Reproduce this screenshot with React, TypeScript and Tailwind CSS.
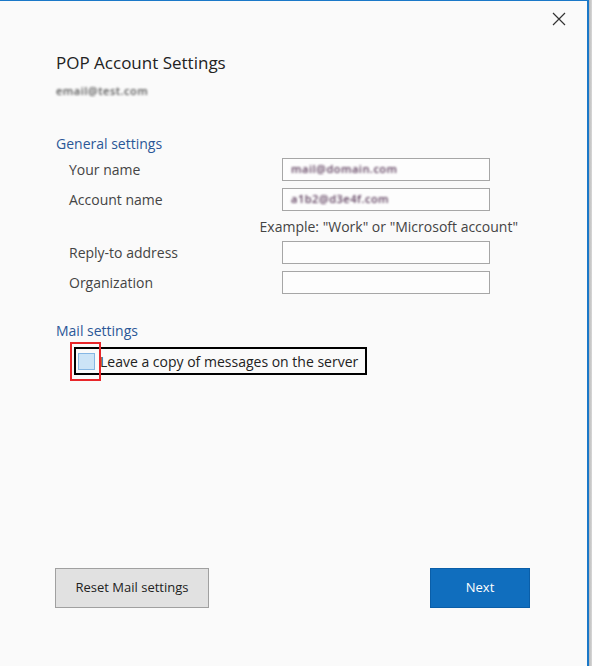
import React from "react";

const font = { fontFamily: '"Open Sans", "Noto Sans", sans-serif' };

function Field({ label, value }: { label: string; value?: string }) {
  return (
    <div className="flex items-center h-[23px]">
      <div className="w-[226px] pl-[13px] text-[14px] text-[#444444]">{label}</div>
      <div className="w-[208px] h-[23px] border border-[#a6a6a6] bg-[#fdfdfd] flex items-center pl-[8px]">
        {value ? (
          <span className="text-[11px] font-semibold text-[#5a3a5a] blur-[0.8px] tracking-[0.5px]">{value}</span>
        ) : null}
      </div>
    </div>
  );
}

export default function App() {
  return (
    <div className="w-[592px] h-[666px] flex bg-[#f9f9f9]" style={font}>
      <div className="w-[589px] h-[666px] border-t border-r-2 border-[#1a78c8] bg-[#fafafa] flex flex-col">
        <div className="h-[49px] flex justify-end pr-[21px] pt-[11px]">
          <svg width="14" height="14" viewBox="0 0 14 14">
            <path d="M1 1 L13 13 M13 1 L1 13" stroke="#333333" strokeWidth="1.2" />
          </svg>
        </div>
        <div className="pl-[56px] h-[25px] flex items-center text-[17px] text-[#222222]">
          POP Account Settings
        </div>
        <div className="pl-[56px] h-[22px] mt-[5px] flex items-center">
          <span className="text-[11px] font-semibold text-[#555555] blur-[0.8px] tracking-[0.5px]">email@test.com</span>
        </div>
        <div className="pl-[56px] mt-[31px] h-[20px] flex items-center text-[14px] text-[#2b5797]">
          General settings
        </div>
        <div className="pl-[56px] mt-[5px] flex flex-col">
          <Field label="Your name" value="mail@domain.com" />
          <div className="h-[7px]" />
          <Field label="Account name" value="a1b2@d3e4f.com" />
          <div className="h-[30px] flex items-center justify-end w-[462px] text-[14px] text-[#444444]">
            Example: "Work" or "Microsoft account"
          </div>
          <Field label="Reply-to address" />
          <div className="h-[7px]" />
          <Field label="Organization" />
        </div>
        <div className="pl-[56px] mt-[26px] h-[20px] flex items-center text-[14px] text-[#2b5797]">
          Mail settings
        </div>
        <div className="pl-[74px] mt-[7px]">
          <div className="relative inline-flex items-center h-[28px] w-[293px] border-2 border-black pl-[2px]">
            <div className="w-[17px] h-[17px] border border-[#86b7e4] bg-[#cce4f7]" />
            <span className="ml-[5px] text-[14px] text-[#222222] whitespace-nowrap">
              Leave a copy of messages on the server
            </span>
            <div className="absolute left-[-6px] top-[-7px] w-[31px] h-[39px] border-2 border-[#e8262a]" />
          </div>
        </div>
        <div className="flex-1" />
        <div className="pl-[55px] pb-[58px] flex">
          <div className="w-[475px] flex justify-between">
            <button className="w-[154px] h-[40px] bg-[#e1e1e1] border border-[#a0a0a0] text-[13px] text-[#222222]">
              Reset Mail settings
            </button>
            <button className="w-[100px] h-[40px] bg-[#106ebe] border border-[#0a5ea8] text-[13px] text-white">
              Next
            </button>
          </div>
        </div>
      </div>
      <div className="w-[3px] h-[666px] bg-gradient-to-r from-[#b8b8b8] to-[#d8d8d8]" />
    </div>
  );
}
